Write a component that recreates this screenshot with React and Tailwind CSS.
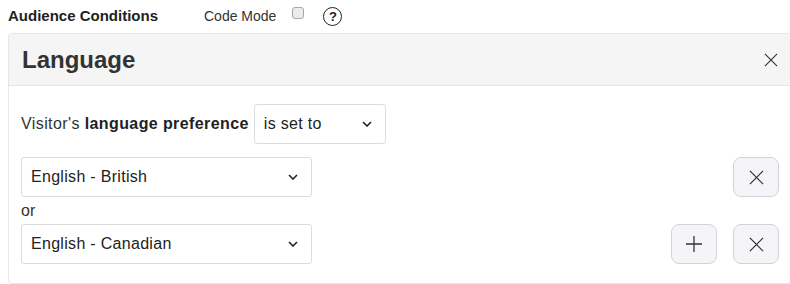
import React from 'react';

function Chevron() {
  return (
    <svg width="10" height="6" viewBox="0 0 10 6" fill="none" stroke="#222" strokeWidth="1.6">
      <path d="M1 1l4 4 4-4" />
    </svg>
  );
}

function Cross({ size = 16 }) {
  return (
    <svg width={size} height={size} viewBox="0 0 16 16" fill="none" stroke="#333" strokeWidth="1.3">
      <path d="M1 1l14 14M15 1L1 15" />
    </svg>
  );
}

function Plus() {
  return (
    <svg width="18" height="18" viewBox="0 0 18 18" fill="none" stroke="#333" strokeWidth="1.3">
      <path d="M9 1v16M1 9h16" />
    </svg>
  );
}

function Select({ value, className }) {
  return (
    <div className={`h-10 flex items-center justify-between bg-white border border-[#dcdcdc] rounded-[3px] pl-[9px] pr-[13px] text-[16px] text-[#222] ${className}`}>
      <span className="tracking-[0.3px]">{value}</span>
      <Chevron />
    </div>
  );
}

function IconButton({ children }) {
  return (
    <button className="w-[46px] h-10 flex items-center justify-center bg-[#f5f5f7] border border-[#d2d2dc] rounded-lg">
      {children}
    </button>
  );
}

export default function App() {
  return (
    <div className="w-[790px] h-[284px] overflow-hidden bg-white text-[#333]" style={{ fontFamily: '"Liberation Sans", Arial, sans-serif' }}>
      {/* Top bar */}
      <div className="h-[33px] flex items-center pl-2">
        <span className="text-[15px] font-bold text-[#222] w-[196px]">Audience Conditions</span>
        <span className="text-[14px] text-[#333]">Code Mode</span>
        <span className="ml-[16px] w-3 h-3 rounded-[3px] bg-[#ebebeb] border border-[#a8a8a8] -mt-2"></span>
        <span className="ml-[19px] w-[19px] h-[19px] rounded-full border-[1.5px] border-[#222] flex items-center justify-center text-[13px] font-bold text-[#222] leading-none">?</span>
      </div>

      {/* Card */}
      <div className="ml-2 w-[784px] h-[251px] border border-[#e6e6e6] rounded-[4px] overflow-hidden">
        <div className="h-[52px] bg-[#f5f5f5] border-b border-[#e6e6e6] flex items-center justify-between pl-[13px] pr-[13px]">
          <span className="text-[24px] font-bold text-[#333]">Language</span>
          <Cross size={14} />
        </div>

        <div className="pt-[18px] pl-3 pr-3">
          <div className="flex items-center">
            <span className="text-[16px] text-[#333] tracking-[0.4px]">
              Visitor's <b className="text-[#222]">language preference</b>
            </span>
            <Select value="is set to" className="ml-[5px] w-[132px]" />
          </div>

          <div className="mt-[13px] flex items-center justify-between">
            <Select value="English - British" className="w-[291px]" />
            <IconButton><Cross size={15} /></IconButton>
          </div>

          <div className="text-[16px] text-[#333] leading-[27px] h-[27px]">or</div>

          <div className="flex items-center">
            <Select value="English - Canadian" className="w-[291px]" />
            <div className="flex-1"></div>
            <IconButton><Plus /></IconButton>
            <div className="w-[16px]"></div>
            <IconButton><Cross size={15} /></IconButton>
          </div>
        </div>
      </div>
    </div>
  );
}
